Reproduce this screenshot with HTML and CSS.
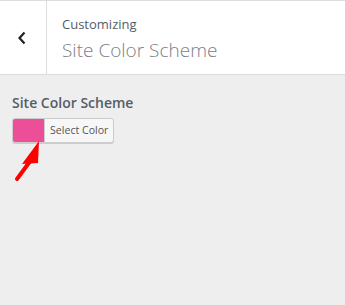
FILE: index.html
```html
<!DOCTYPE html>
<html lang="en">
<head>
  <meta charset="UTF-8">
  <meta name="viewport" content="width=device-width, initial-scale=1.0">
  <title>Customizing - Site Color Scheme</title>
  <link rel="stylesheet" href="styles.css">
</head>
<body>
  <div class="panel-header">
    <button class="back-button" aria-label="Back">
      <svg width="10" height="14" viewBox="0 0 10 14">
        <path d="M7.5 1.5 L2.5 7 L7.5 12.5" fill="none" stroke="#1d2327" stroke-width="2.2"/>
      </svg>
    </button>
    <div class="panel-title">
      <span class="crumb">Customizing</span>
      <h3>Site Color Scheme</h3>
    </div>
  </div>

  <div class="section">
    <div class="control-label">Site Color Scheme</div>
    <div class="color-picker">
      <button class="color-result">
        <span class="swatch"></span>
        <span class="picker-text">Select Color</span>
      </button>
      <svg class="arrow" width="40" height="50" viewBox="0 0 40 50">
        <line x1="5" y1="40" x2="19" y2="21" stroke="#ff0000" stroke-width="4" stroke-linecap="round"/>
        <polygon points="27,2 26,24 10,25" fill="#ff0000"/>
      </svg>
    </div>
  </div>
</body>
</html>
```

FILE: styles.css
```css
body {
  margin: 0;
  padding: 0;
  font-family: "Open Sans", "Noto Sans", sans-serif;
  background-color: #eeeeee;
  color: #555d66;
  height: 305px;
}

.panel-header {
  display: flex;
  height: 73px;
  background: #ffffff;
  border-top: 1px solid #dddddd;
  border-bottom: 1px solid #dddddd;
}

.back-button {
  width: 47px;
  border: none;
  border-right: 1px solid #dddddd;
  background: #ffffff;
  padding: 0;
  display: flex;
  align-items: center;
  justify-content: center;
  cursor: pointer;
}

.back-button svg {
  margin-right: 3px;
  margin-top: 1px;
}

.panel-title {
  padding: 14px 0 0 15px;
}

.crumb {
  display: block;
  font-size: 13px;
  line-height: 18px;
  color: #555d66;
}

.panel-title h3 {
  margin: 4px 0 0;
  font-size: 19px;
  font-weight: 300;
  line-height: 26px;
  color: #7b8087;
}

.section {
  padding: 18px 12px;
}

.control-label {
  font-size: 14px;
  font-weight: 600;
  line-height: 20px;
  color: #555d66;
  margin-bottom: 5px;
}

.color-picker {
  position: relative;
}

.color-result {
  display: flex;
  align-items: stretch;
  height: 25px;
  padding: 0;
  border: 1px solid #cccccc;
  border-radius: 3px;
  background: #f7f7f7;
  box-shadow: 0 1px 0 #cccccc;
  overflow: hidden;
  cursor: pointer;
  font-family: inherit;
}

.swatch {
  width: 31px;
  background: #ec4f98;
  border-right: 1px solid #cccccc;
}

.picker-text {
  padding: 0 5px;
  font-size: 10.6px;
  line-height: 23px;
  color: #555555;
}

.arrow {
  position: absolute;
  left: 0;
  top: 21px;
}
```
